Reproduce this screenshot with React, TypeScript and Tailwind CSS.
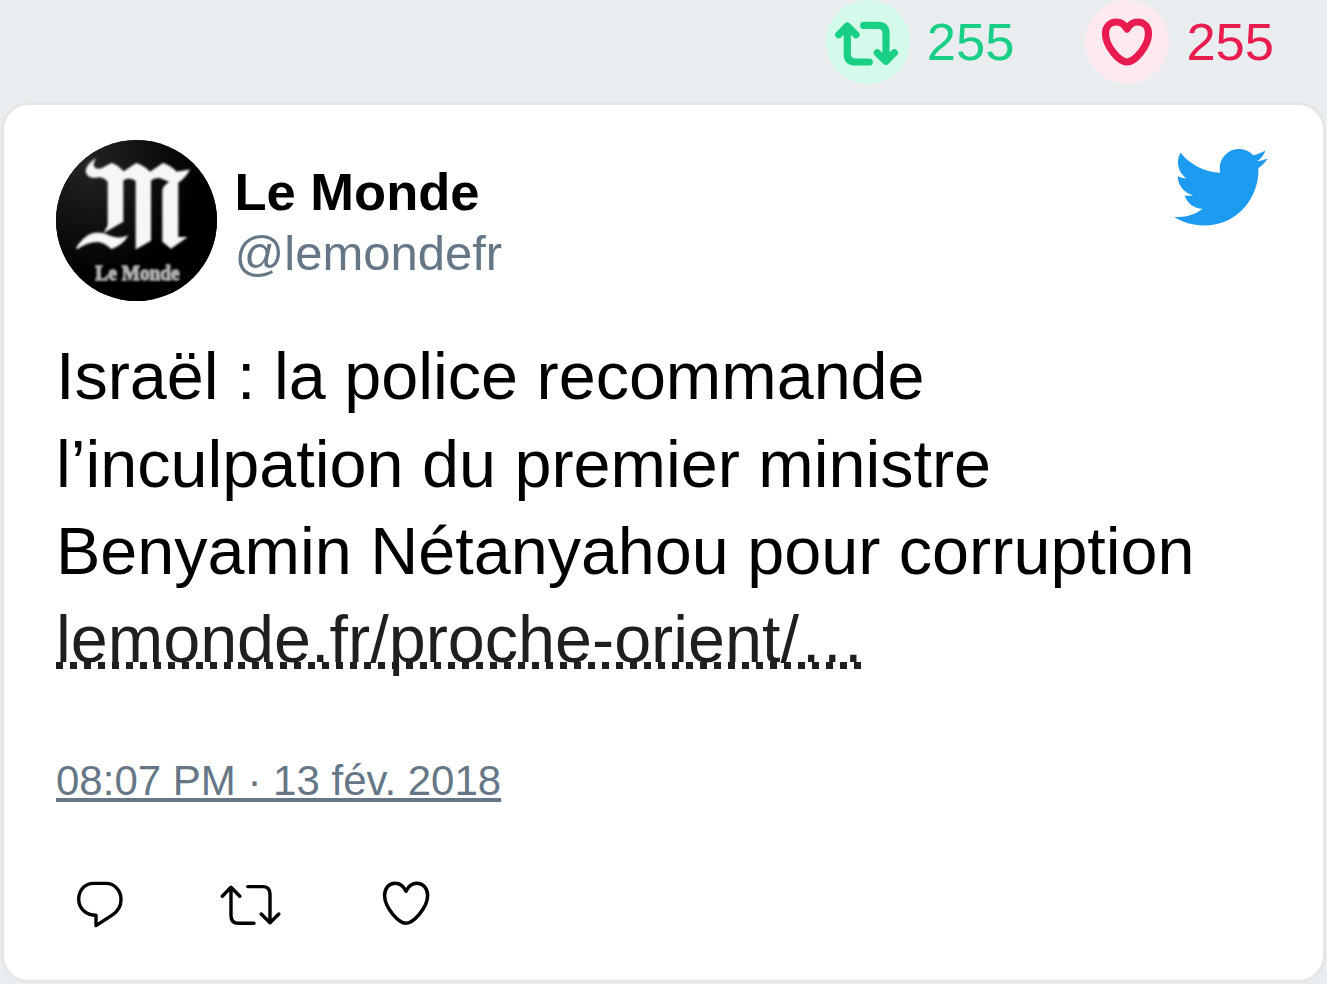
import React from "react";

const RETWEET_SMALL = "M222.3 896L231 887L239.8 896M231 887.5V915.5Q231 923 238.5 923H254M247.8 886.3H262.5Q270 886.3 270 893.8V922M261.2 913.7L270 922.5L278.8 913.7";
const RETWEET_BIG = "M838.7 34.7L847.3 26L856 34.7M847.3 27V54Q847.3 62 855.3 62H869.3M863.7 25.4H878Q886 25.4 886 33.4V60M877.3 52.8L886 61.3L894.3 52.8";

function Avatar() {
  return (
    <svg className="size-[161px] shrink-0 rounded-full bg-black" viewBox="48 30 483 483" aria-label="Le Monde">
      <defs>
        <radialGradient id="shade" cx="0.2" cy="0.15" r="0.7">
          <stop offset="0" stopColor="#242424" />
          <stop offset="1" stopColor="#000" />
        </radialGradient>
        <filter id="soft" x="-10%" y="-10%" width="120%" height="120%">
          <feGaussianBlur stdDeviation="3" />
        </filter>
      </defs>
      <rect x="48" y="30" width="483" height="483" fill="url(#shade)" />
      <g fill="#f6f6f6" stroke="#f6f6f6" strokeWidth="4" filter="url(#soft)">
        <path d="M163 90C153 112 164 121 184 117L214 101Q235 107 250 127L289 101Q314 110 330 128L369 101Q392 108 409 127L446 121Q435 142 413 157V322L437 323L393 354L369 334V180Q371 166 392 156L362 143Q344 138 331 152V331L289 355V152Q268 135 248 151V274L196 304L205 286V155Q190 136 168 141Q146 144 139 126Q139 107 163 90Z" />
        <path d="M110 356Q126 325 153 313Q180 304 208 318Q235 330 260 320Q246 344 214 355Q199 339 176 334Q145 332 110 356Z" />
      </g>
      <text x="166" y="449" textLength="253" lengthAdjust="spacingAndGlyphs" fill="#b5b5b5" stroke="#b5b5b5" strokeWidth="4" filter="url(#soft)" className="font-['Liberation_Serif',serif] text-[66px] font-bold">Le Monde</text>
    </svg>
  );
}

export default function App() {
  return (
    <div className="flex h-[984px] w-[1327px] flex-col overflow-hidden bg-[#e9edf0] font-['Liberation_Sans',sans-serif]">
      <div className="flex h-[102px] shrink-0 items-start justify-end pr-[53px] text-[52.5px] leading-[84px]">
        <div className="flex text-[#19cf86]">
          <svg className="mr-[17px] size-[84px] rounded-full bg-[#d3faeb]" viewBox="826 0 84 84" fill="none" stroke="currentColor" strokeWidth="7.2" strokeLinecap="round" strokeLinejoin="round">
            <path d={RETWEET_BIG} />
          </svg>
          <span>255</span>
        </div>
        <div className="ml-[71px] flex text-[#e81c4f]">
          <svg className="mr-[17px] size-[84px] rounded-full bg-[#fdeaf0]" viewBox="1085 0 84 84" fill="none" stroke="currentColor" strokeWidth="7.2" strokeLinecap="round" strokeLinejoin="round">
            <path d="M1127 29C1124.5 24.5 1121 22 1116.3 22C1110 22 1105.5 26.5 1105.5 33.5C1105.5 46.5 1119.5 62 1127 62C1134.5 62 1148.5 46.5 1148.5 33.5C1148.5 26.5 1144 22 1137.7 22C1133 22 1129.5 24.5 1127 29Z" />
          </svg>
          <span>255</span>
        </div>
      </div>

      <div className="mx-px flex h-[881px] shrink-0 flex-col rounded-[28px] border-[3px] border-[#e6e6e6] bg-white pt-[35px] pr-[55px] pl-[52px]">
        <div className="flex items-start">
          <Avatar />
          <div className="flex flex-col pt-[21px] pl-[17.5px]">
            <span className="text-[52.5px] leading-[62px] font-bold text-black">Le Monde</span>
            <span className="text-[49px] leading-[61px] text-[#657786]">@lemondefr</span>
          </div>
          <svg className="mt-[8.7px] ml-auto h-[77px] w-[94px]" viewBox="0.937 2.752 22.706 18.55" fill="#1d9bf0">
            <path d="M23.643 4.937c-.835.37-1.732.62-2.675.733.962-.576 1.7-1.49 2.048-2.578-.9.534-1.897.922-2.958 1.13-.85-.904-2.06-1.47-3.4-1.47-2.572 0-4.658 2.086-4.658 4.66 0 .364.042.718.12 1.06-3.873-.195-7.304-2.05-9.602-4.868-.4.69-.63 1.49-.63 2.342 0 1.616.823 3.043 2.072 3.878-.764-.025-1.482-.234-2.11-.583v.06c0 2.257 1.605 4.14 3.737 4.568-.392.106-.803.162-1.227.162-.3 0-.593-.028-.877-.082.593 1.85 2.313 3.198 4.352 3.234-1.595 1.25-3.604 1.995-5.786 1.995-.376 0-.747-.022-1.112-.065 2.062 1.323 4.51 2.093 7.14 2.093 8.57 0 13.255-7.098 13.255-13.254 0-.2-.005-.402-.014-.602.91-.658 1.7-1.477 2.323-2.41z" />
          </svg>
        </div>

        <div className="mt-[32px] text-[66.5px] leading-[87.5px] whitespace-nowrap text-black">
          <div>Israël : la police recommande</div>
          <div>l’inculpation du premier ministre</div>
          <div>Benyamin Nétanyahou pour corruption</div>
          <div>
            <a className="bg-[repeating-linear-gradient(90deg,#1f1f1f_0_7px,transparent_7px_14px)] bg-[length:100%_7px] bg-[position:0_60px] bg-no-repeat text-[#1f1f1f]">lemonde.fr/proche-orient/…</a>
          </div>
        </div>

        <div className="mt-[73px] text-[42px] leading-[49px] text-[#657786] underline decoration-[3.5px] underline-offset-[3px] [text-decoration-skip-ink:none]">
          08:07 PM · 13 fév. 2018
        </div>

        <div className="mt-[70px] flex items-center gap-[90px] pl-[16px] text-black">
          <svg className="h-[60px] w-[56px]" viewBox="72 875 56 60" fill="none" stroke="currentColor" strokeWidth="3.4" strokeLinecap="round" strokeLinejoin="round">
            <path d="M93.5 883.4H106C114.5 883.4 121 890.5 121 899.5C121 906 117.5 911.5 112.5 914.8L96 925.6V915.3C86 915.3 78.7 908.5 78.7 899.3C78.7 890 85 883.4 93.5 883.4Z" />
          </svg>
          <svg className="h-[60px] w-[66px]" viewBox="218 874.7 66 60" fill="none" stroke="currentColor" strokeWidth="3.4" strokeLinecap="round" strokeLinejoin="round">
            <path d={RETWEET_SMALL} />
          </svg>
          <svg className="h-[60px] w-[56px]" viewBox="374 874.4 56 60" fill="none" stroke="currentColor" strokeWidth="3.5" strokeLinecap="round" strokeLinejoin="round">
            <path d="M406 890.5C403.5 885.5 400 882.6 395.2 882.6C389 882.6 384.6 887.5 384.6 895C384.6 907.5 399 922.6 406 922.6C413 922.6 427.6 907.5 427.6 895C427.6 887.5 423 882.6 416.8 882.6C412 882.6 408.5 885.5 406 890.5Z" />
          </svg>
        </div>
      </div>
    </div>
  );
}
